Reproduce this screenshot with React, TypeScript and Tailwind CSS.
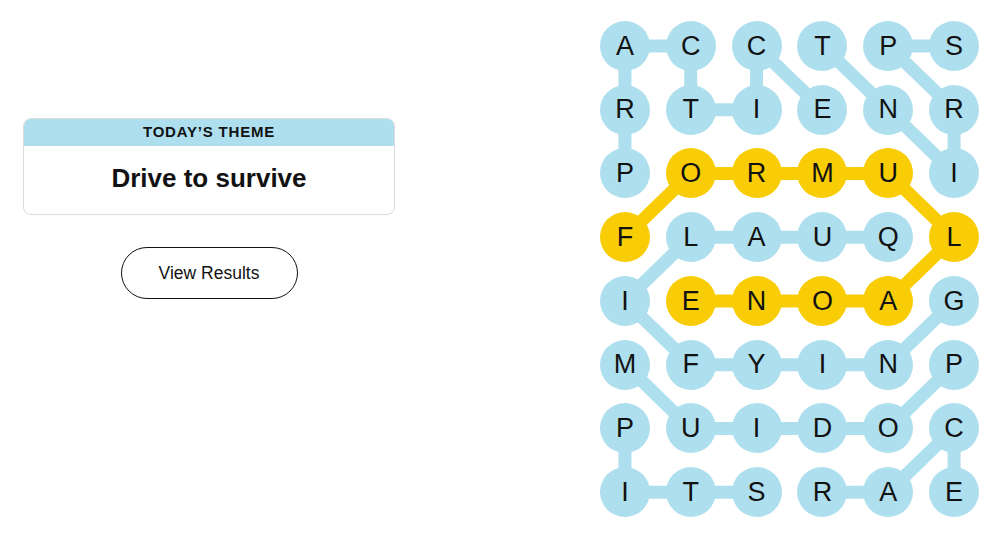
const LETTERS = ["ACCTPS", "RTIENR", "PORMUI", "FLAUQL", "IENOAG", "MFYINP", "PUIDOC", "ITSRAE"];

type Cell = [number, number];

interface Word {
  word: string;
  cells: Cell[];
  spangram?: boolean;
}

// Found words, each as its path through the board (row, col)
const FOUND: Word[] = [
  { word: "PRACTICE", cells: [[2, 0], [1, 0], [0, 0], [0, 1], [1, 1], [1, 2], [0, 2], [1, 3]] },
  { word: "SPRINT", cells: [[0, 5], [0, 4], [1, 5], [2, 5], [1, 4], [0, 3]] },
  {
    word: "FORMULAONE",
    spangram: true,
    cells: [[3, 0], [2, 1], [2, 2], [2, 3], [2, 4], [3, 5], [4, 4], [4, 3], [4, 2], [4, 1]],
  },
  { word: "QUALIFYING", cells: [[3, 4], [3, 3], [3, 2], [3, 1], [4, 0], [5, 1], [5, 2], [5, 3], [5, 4], [4, 5]] },
  { word: "PODIUM", cells: [[5, 5], [6, 4], [6, 3], [6, 2], [6, 1], [5, 0]] },
  { word: "PITS", cells: [[6, 0], [7, 0], [7, 1], [7, 2]] },
  { word: "RACE", cells: [[7, 3], [7, 4], [6, 5], [7, 5]] },
];

const BLUE = "#aedfee";
const YELLOW = "#f8cd05";

const BOARD_W = 395;
const BOARD_H = 510;
const cx = (c: number) => ((c + 0.5) * BOARD_W) / 6;
const cy = (r: number) => ((r + 0.5) * BOARD_H) / 8;

const spanCells = new Set(
  FOUND.filter((w) => w.spangram).flatMap((w) => w.cells.map(([r, c]) => `${r}-${c}`))
);

function Board() {
  return (
    <div className="relative w-[395px] h-[510px]">
      {/* connectors between letters of each found word */}
      <svg className="absolute inset-0" width={BOARD_W} height={BOARD_H} viewBox={`0 0 ${BOARD_W} ${BOARD_H}`}>
        {FOUND.map((w) => (
          <polyline
            key={w.word}
            points={w.cells.map(([r, c]) => `${cx(c)},${cy(r)}`).join(" ")}
            fill="none"
            stroke={w.spangram ? YELLOW : BLUE}
            strokeWidth={13}
            strokeLinejoin="round"
          />
        ))}
      </svg>
      <div className="relative grid grid-cols-6 grid-rows-8 w-full h-full">
        {LETTERS.map((row, r) =>
          row.split("").map((ch, c) => (
            <div key={`${r}-${c}`} className="flex items-center justify-center">
              <div
                className={`w-[50px] h-[50px] rounded-full flex items-center justify-center text-[27px] text-[#121212] ${
                  spanCells.has(`${r}-${c}`) ? "bg-[#f8cd05]" : "bg-[#aedfee]"
                }`}
              >
                {ch}
              </div>
            </div>
          ))
        )}
      </div>
    </div>
  );
}

export default function App() {
  return (
    <div className="flex h-[536px] w-[1000px] bg-white font-['Liberation_Sans',Arial,sans-serif] text-black">
      <section className="w-[418px] px-[23px] pt-[118px] flex flex-col items-center">
        <div className="w-[372px] rounded-lg border border-[#dcdcdc] overflow-hidden">
          <div className="h-[27px] bg-[#aedfee] flex items-center justify-center text-[15px] font-bold tracking-[0.8px] text-[#121212]">
            TODAY’S THEME
          </div>
          <div className="h-[68px] flex items-center justify-center pb-[3px] text-[26px] font-bold text-[#121212]">
            Drive to survive
          </div>
        </div>
        <button className="mt-[32px] w-[177px] h-[52px] rounded-full border border-[#121212] text-[17.5px] text-[#121212]">
          View Results
        </button>
      </section>
      <section className="ml-[174px] pt-[14px]">
        <Board />
      </section>
    </div>
  );
}
